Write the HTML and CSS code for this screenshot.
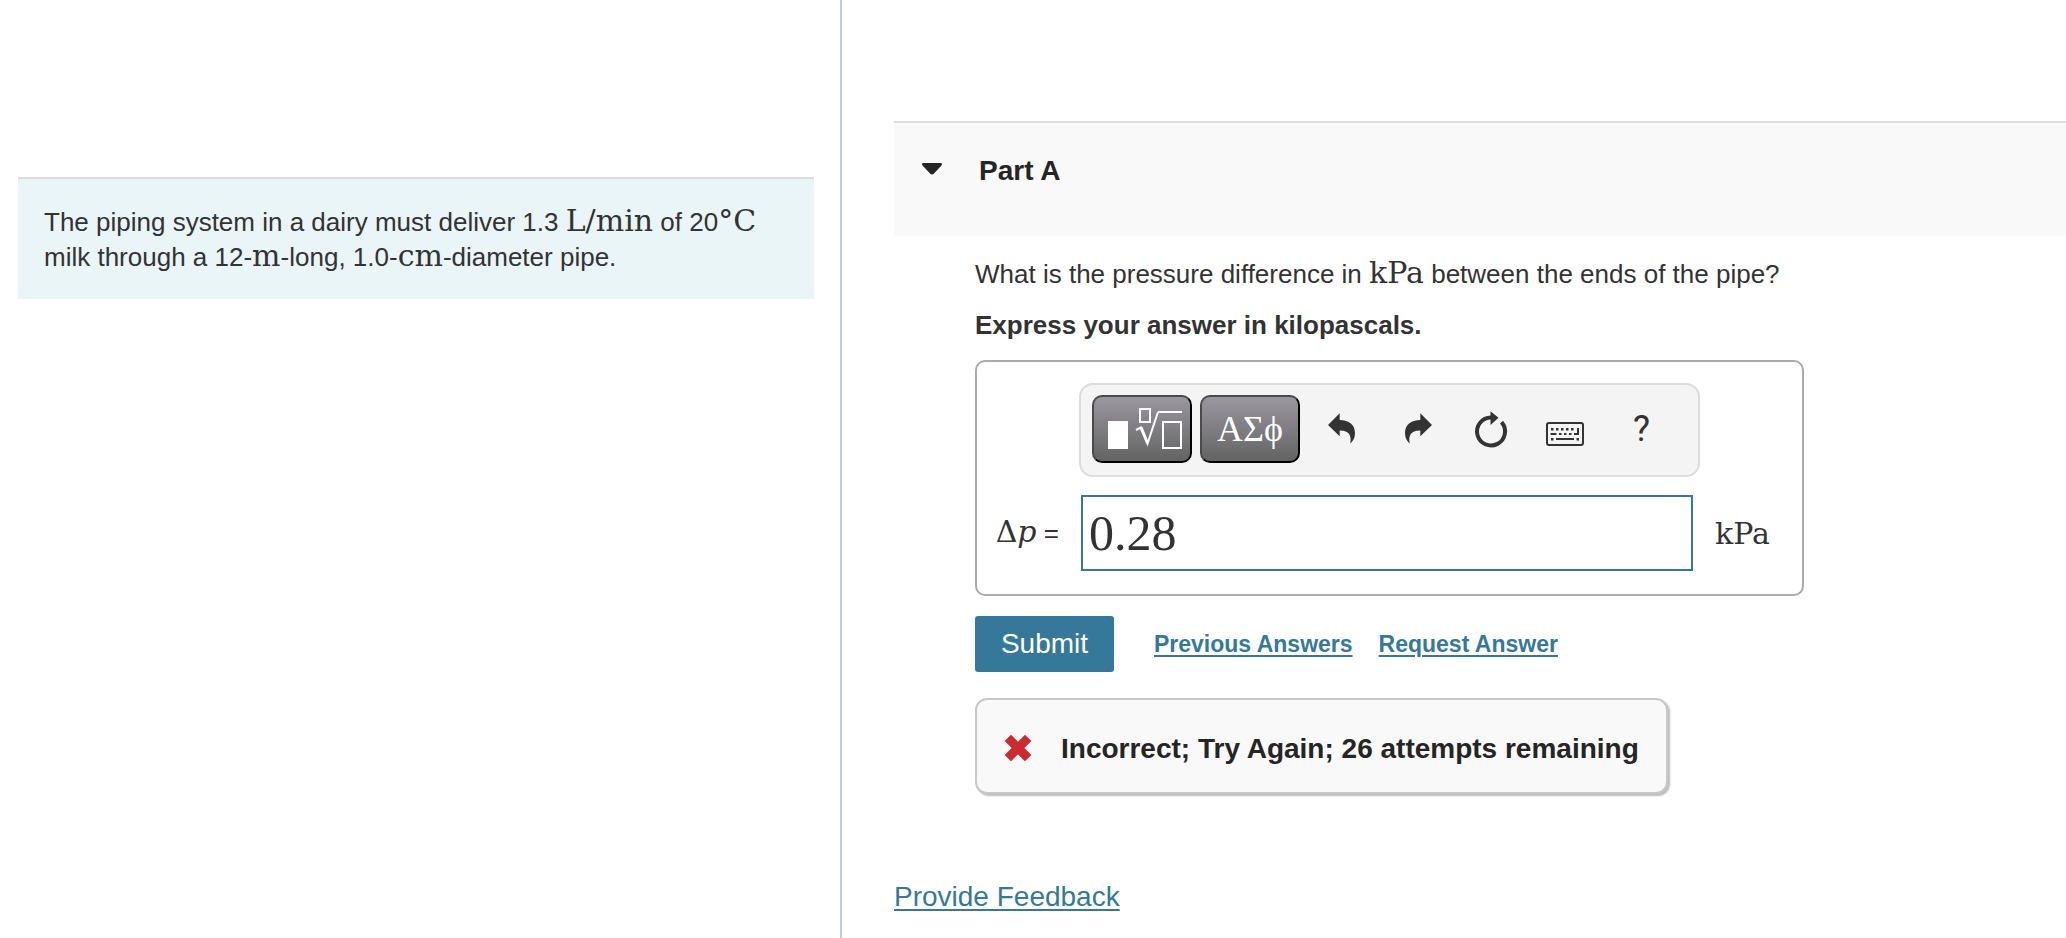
FILE: index.html
```
<!DOCTYPE html>
<html lang="en">
<head>
    <meta charset="utf-8">
    <title>Part A</title>
    <link rel="stylesheet" href="styles.css">
</head>
<body>

<div class="page">
    <!-- Problem statement -->
    <aside class="problem">
        <p class="problem-text">The piping system in a dairy must deliver 1.3 <span class="math">L/min</span> of 20<span class="math">°C</span><br>
        milk through a 12-<span class="math">m</span>-long, 1.0-<span class="math">cm</span>-diameter pipe.</p>
    </aside>

    <!-- Question part -->
    <main class="part">
        <header class="part-header">
            <svg class="arrow" viewBox="0 0 22 12"><path d="M2 0H20Q22 1 20 3L13 10.5Q11 12.500 9 10.500L2 3Q0 1 2 0Z"/></svg>
            <h2>Part A</h2>
        </header>

        <section class="part-body">
            <p class="question">What is the pressure difference in <span class="math">kPa</span> between the ends of the pipe?</p>
            <p class="instruction">Express your answer in kilopascals.</p>

            <form class="answer-box" id="answer-form">
                <div class="toolbar">
                    <button type="button" class="palette" aria-label="Templates">
                        <svg viewBox="2 2 96 64">
                            <rect x="16" y="26" width="20" height="28" fill="#fff"/>
                            <g fill="none" stroke="#fff" stroke-width="2">
                                <rect x="48" y="14" width="10" height="13"/>
                                <rect x="71" y="27" width="18" height="26"/>
                                <path d="M66 17H90"/>
                                <path d="M44 35L49 32.500L55.500 48.500L66 17"/>
                                <path d="M49 32.500L55.500 48" stroke-width="3"/>
                            </g>
                        </svg>
                    </button>
                    <button type="button" class="palette">ΑΣϕ</button>
                    <button type="button" class="tool" aria-label="Undo">
                        <svg viewBox="0 0 45 44"><path d="M9 18L20.700 6.300V13C30 13 36 18 36 26C36 31 34 34 31.300 36.700C32.500 29 31 23.500 20.700 23.500V29.300Z"/></svg>
                    </button>
                    <button type="button" class="tool" aria-label="Redo">
                        <svg viewBox="0 0 45 44"><path d="M38 18L26.300 6.300V13C17 13 11 18 11 26C11 31 13 34 15.700 36.700C14.500 29 16 23.500 26.300 23.500V29.300Z"/></svg>
                    </button>
                    <button type="button" class="tool" aria-label="Reset">
                        <svg viewBox="0 0 45 44">
                            <path d="M32.500 15.200A14 14 0 1 1 22 10.500" fill="none" stroke="#333" stroke-width="4"/>
                            <path d="M21.500 4.200L29.500 10.800L21.500 18Z"/>
                        </svg>
                    </button>
                    <button type="button" class="tool" aria-label="Keyboard shortcuts">
                        <svg viewBox="0 0 45 44">
                            <rect x="3" y="16" width="36" height="22" rx="2" fill="none" stroke="#333" stroke-width="2"/>
                            <path d="M7 21h2.500v2.500h-2.500zM12 21h2.500v2.500h-2.500zM17 21h2.500v2.500h-2.500zM22 21h2.500v2.500h-2.500zM27 21h2.500v2.500h-2.500z"/>
                            <path d="M6.500 26h6v2h-6zM15 26h2.500v2h-2.500zM20 26h2.500v2h-2.500zM25 26h2.500v2h-2.500zM33 21h2v7h-5v-2h3z"/>
                            <path d="M7 31h2.500v2.500h-2.500zM12 31h18v2h-18zM32.500 31h2.500v2.500h-2.500z"/>
                        </svg>
                    </button>
                    <button type="button" class="tool help">?</button>
                </div>

                <label class="answer-label" for="answer"><span class="math">Δ<i>p</i></span> =</label>
                <input type="text" id="answer" class="answer-input" value="0.28">
                <span class="math">kPa</span>
            </form>

            <div class="actions">
                <button type="submit" class="submit" form="answer-form">Submit</button>
                <a href="#">Previous Answers</a>
                <a href="#">Request Answer</a>
            </div>

            <div class="feedback">
                <svg class="cross" viewBox="0 0 28 28"><path d="M7 7L21 21M21 7L7 21" stroke="#cc2a2d" stroke-width="9" stroke-linecap="square"/></svg>
                <span>Incorrect; Try Again; 26 attempts remaining</span>
            </div>
        </section>

        <a href="#" class="provide">Provide Feedback</a>
    </main>
</div>

</body>
</html>
```
FILE: styles.css
```
* {
    box-sizing: border-box;
}
body {
    margin: 0;
    font-family: "Liberation Sans", Arial, sans-serif;
    font-size: 26px;
    line-height: 35px;
    color: #333;
    background-color: #fff;
}
h2, p {
    margin: 0;
}
a {
    color: #36789a;
    text-decoration-thickness: 2px;
    text-underline-offset: 3px;
}
.page {
    display: grid;
    grid-template-columns: 842fr 1224fr;
    min-height: 100vh;
}
.math {
    font-family: "DejaVu Serif", serif;
    font-size: 30px;
    line-height: 1px;
}

/* Left side */
.problem {
    padding: 177px 26px 0 18px;
    border-right: 2px solid #bfcbe0;
}
.problem-text {
    padding: 26px 26px 24px;
    border-top: 2px solid #ddd;
    background-color: #eaf5f8;
}

/* Right side */
.part {
    padding: 121px 0 0 52px;
}
.part-header {
    display: flex;
    align-items: flex-start;
    gap: 36px;
    height: 115px;
    padding: 30px 27px;
    border-top: 2px solid #ddd;
    background-color: #f9f9f9;
}
.part-header h2 {
    font-size: 28px;
    color: #252525;
}
.arrow {
    width: 22px;
    height: 12px;
    margin-top: 10px;
    fill: #252525;
}
.part-body {
    padding: 21px 24px 0 81px;
}
.instruction {
    margin: 16px 0 17px;
    font-weight: bold;
}
.answer-box {
    display: grid;
    grid-template-columns: 82px 1fr 87px;
    column-gap: 22px;
    row-gap: 18px;
    align-items: center;
    max-width: 829px;
    padding: 21px 0 23px 0;
    border: 2px solid #aaa;
    border-radius: 10px;
}
.toolbar {
    grid-column: 2 / 4;
    display: flex;
    align-items: flex-start;
    width: 621px;
    height: 94px;
    margin-left: -2px;
    padding: 10px 11px;
    border: 2px solid #ddd;
    border-radius: 14px;
    background-color: #f4f4f4;
}
.palette {
    width: 100px;
    height: 68px;
    padding: 0;
    border: 2px outset #333;
    border-color: #4a4a4a #000 #000 #4a4a4a;
    border-radius: 10px;
    background: linear-gradient(#9a979f, #636363);
    color: #fff;
    font-family: "Liberation Serif", serif;
    font-size: 36px;
}
.palette + .palette {
    margin: 0 4px 0 8px;
}
.palette svg {
    display: block;
    width: 96px;
    height: 64px;
}
.tool {
    display: flex;
    align-items: center;
    justify-content: center;
    width: 75px;
    height: 68px;
    padding: 0;
    border: none;
    background: none;
    color: #333;
}
.tool svg {
    width: 45px;
    height: 44px;
    fill: #333;
}
.help {
    font-family: Roboto, sans-serif;
    font-size: 36px;
}
.answer-label {
    text-align: right;
    white-space: nowrap;
}
.answer-input {
    width: 100%;
    height: 76px;
    padding: 0 6px;
    border: 2px solid #36789a;
    outline: none;
    color: #333;
    font-family: "Liberation Serif", serif;
    font-size: 50px;
}
.actions {
    display: flex;
    align-items: center;
    gap: 26px;
    margin: 20px 0 26px;
    font-size: 23px;
    font-weight: bold;
}
.submit {
    width: 139px;
    height: 56px;
    margin-right: 14px;
    border: none;
    border-radius: 3px;
    background-color: #36789a;
    color: #fff;
    font-family: inherit;
    font-size: 28px;
}
.feedback {
    display: flex;
    align-items: center;
    gap: 29px;
    width: fit-content;
    height: 96px;
    padding: 4px 27px 0;
    border: 2px solid #c8c8c8;
    border-radius: 12px;
    box-shadow: 2px 2px 2px #bbb;
    background-color: #f9f9f9;
    color: #252525;
    font-size: 28px;
    font-weight: bold;
}
.cross {
    width: 28px;
    height: 28px;
}
.provide {
    display: inline-block;
    margin-top: 85px;
    font-size: 28px;
}
```
